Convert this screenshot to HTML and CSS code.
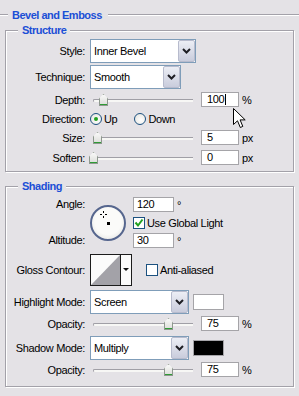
FILE: index.html
```html
<!DOCTYPE html>
<html lang="en">
<head>
    <meta charset="UTF-8">
    <title>Bevel and Emboss</title>
    <link rel="stylesheet" href="styles.css">
</head>
<body>
    <div class="panel">
        <div class="section-title"><span>Bevel and Emboss</span></div>

        <fieldset class="group structure">
            <legend>Structure</legend>

            <div class="row row-select">
                <span class="label">Style:</span>
                <div class="select sel-style">
                    <span class="value">Inner Bevel</span>
                    <span class="btn"><svg width="9" height="6" viewBox="0 0 9 6"><polyline points="1,1 4.5,4.5 8,1" fill="none" stroke="#1e1e24" stroke-width="2"/></svg></span>
                </div>
            </div>

            <div class="row row-select gap-2">
                <span class="label">Technique:</span>
                <div class="select sel-tech">
                    <span class="value">Smooth</span>
                    <span class="btn"><svg width="9" height="6" viewBox="0 0 9 6"><polyline points="1,1 4.5,4.5 8,1" fill="none" stroke="#1e1e24" stroke-width="2"/></svg></span>
                </div>
            </div>

            <div class="row row-slider gap-3">
                <span class="label">Depth:</span>
                <div class="controls">
                    <div class="slider">
                        <div class="track"></div>
                        <span class="thumb" style="left: 9px"></span>
                    </div>
                    <div class="field">100<span class="caret"></span></div>
                    <span class="unit">%</span>
                </div>
            </div>

            <div class="row row-radio gap-4">
                <span class="label">Direction:</span>
                <div class="controls">
                    <span class="radio on"></span><span class="radio-text">Up</span>
                    <span class="radio"></span><span class="radio-text">Down</span>
                </div>
            </div>

            <div class="row row-slider gap-3">
                <span class="label">Size:</span>
                <div class="controls">
                    <div class="slider">
                        <div class="track"></div>
                        <span class="thumb" style="left: 3px"></span>
                    </div>
                    <div class="field">5</div>
                    <span class="unit">px</span>
                </div>
            </div>

            <div class="row row-slider gap-5">
                <span class="label">Soften:</span>
                <div class="controls">
                    <div class="slider">
                        <div class="track"></div>
                        <span class="thumb" style="left: -1px"></span>
                    </div>
                    <div class="field">0</div>
                    <span class="unit">px</span>
                </div>
            </div>
        </fieldset>

        <fieldset class="group shading">
            <legend>Shading</legend>

            <div class="angle">
                <span class="label angle-label">Angle:</span>
                <div class="dial">
                    <span class="cross"></span>
                    <span class="dot"></span>
                </div>
                <div class="controls angle-input">
                    <div class="field wide">120</div>
                    <span class="unit">°</span>
                </div>
                <div class="controls check-row">
                    <span class="check on"><svg width="10" height="10" viewBox="0 0 10 10"><polyline points="1.5,4.5 4,7.5 8.5,1.5" fill="none" stroke="#21a121" stroke-width="2"/></svg></span>
                    <span class="check-text">Use Global Light</span>
                </div>
                <span class="label alt-label">Altitude:</span>
                <div class="controls alt-input">
                    <div class="field wide">30</div>
                    <span class="unit">°</span>
                </div>
            </div>

            <div class="row row-contour">
                <span class="label">Gloss Contour:</span>
                <div class="controls">
                    <div class="contour">
                        <svg width="42" height="32" viewBox="0 0 42 32">
                            <rect x="0.5" y="0.5" width="41" height="31" fill="#fbfbfb" stroke="#1c1c1c"/>
                            <polygon points="1,31 30,1 30,31" fill="#a3a2a8"/>
                            <line x1="30.5" y1="1" x2="30.5" y2="31" stroke="#1c1c1c"/>
                            <polygon points="33,14 39,14 36,17" fill="#111"/>
                        </svg>
                    </div>
                    <span class="check anti"></span>
                    <span class="check-text">Anti-aliased</span>
                </div>
            </div>

            <div class="row row-select gap-4">
                <span class="label">Highlight Mode:</span>
                <div class="controls">
                    <div class="select sel-mode">
                        <span class="value">Screen</span>
                        <span class="btn"><svg width="9" height="6" viewBox="0 0 9 6"><polyline points="1,1 4.5,4.5 8,1" fill="none" stroke="#1e1e24" stroke-width="2"/></svg></span>
                    </div>
                    <span class="swatch white"></span>
                </div>
            </div>

            <div class="row row-slider gap-2">
                <span class="label">Opacity:</span>
                <div class="controls">
                    <div class="slider">
                        <div class="track"></div>
                        <span class="thumb" style="left: 74px"></span>
                    </div>
                    <div class="field">75</div>
                    <span class="unit">%</span>
                </div>
            </div>

            <div class="row row-select gap-5">
                <span class="label">Shadow Mode:</span>
                <div class="controls">
                    <div class="select sel-mode">
                        <span class="value">Multiply</span>
                        <span class="btn"><svg width="9" height="6" viewBox="0 0 9 6"><polyline points="1,1 4.5,4.5 8,1" fill="none" stroke="#1e1e24" stroke-width="2"/></svg></span>
                    </div>
                    <span class="swatch black"></span>
                </div>
            </div>

            <div class="row row-slider gap-2">
                <span class="label">Opacity:</span>
                <div class="controls">
                    <div class="slider">
                        <div class="track"></div>
                        <span class="thumb" style="left: 74px"></span>
                    </div>
                    <div class="field">75</div>
                    <span class="unit">%</span>
                </div>
            </div>
        </fieldset>

        <svg class="cursor" width="13" height="21" viewBox="0 0 13 21">
            <path d="M0.5,0.5 L0.5,16.5 L4.5,12.8 L7.3,19.5 L9.8,18.4 L7.1,11.9 L12.2,11.9 Z" fill="#fff" stroke="#000"/>
        </svg>
    </div>
</body>
</html>
```

FILE: styles.css
```css
* {
    margin: 0;
    padding: 0;
    box-sizing: border-box;
}

body {
    background: #e4e2e6;
    font-family: 'Liberation Sans', Arial, sans-serif;
    font-size: 11px;
    letter-spacing: -0.35px;
    color: #000;
    width: 299px;
    height: 396px;
    overflow: hidden;
}

.panel {
    position: relative;
    padding-top: 8px;
}

/* headings */

.section-title {
    display: flex;
    align-items: center;
    height: 14px;
    font-weight: bold;
    color: #1b4fd6;
    letter-spacing: -0.5px;
}

.section-title::before,
.section-title::after {
    content: "";
    border-top: 1px solid #a3a1a9;
    border-bottom: 1px solid #fff;
}

.section-title::before {
    width: 8px;
    margin-right: 4px;
}

.section-title::after {
    flex: 1;
    margin-left: 6px;
}

.group {
    margin: 1px 5px 0;
    border: 1px solid #a3a1a9;
    box-shadow: inset 1px 1px 0 #fff, 1px 1px 0 #fff;
    min-inline-size: 0;
}

.group legend {
    margin-left: 12px;
    padding: 0 4px;
    line-height: 14px;
    font-weight: bold;
    color: #1b4fd6;
    letter-spacing: -0.5px;
    background: #e4e2e6;
}

.structure {
    padding: 2px 0 6px;
}

.shading {
    margin-top: 7px;
    padding: 4px 0 9px;
}

/* rows */

.row {
    display: grid;
    grid-template-columns: 79px auto;
    column-gap: 5px;
    align-items: center;
}

.label {
    text-align: right;
    white-space: nowrap;
}

.row-select { height: 24px; }
.row-slider { height: 15px; }
.row-radio { height: 16px; }
.row-contour { height: 32px; margin-top: 6px; }

.gap-2 { margin-top: 2px; }
.gap-3 { margin-top: 3px; }
.gap-4 { margin-top: 4px; }
.gap-5 { margin-top: 5px; }

.controls {
    display: flex;
    align-items: center;
}

/* dropdowns */

.select {
    display: flex;
    align-items: stretch;
    height: 24px;
    border: 1px solid #7f9db9;
    background: #fff;
}

.sel-style { width: 106px; }
.sel-tech { width: 91px; }
.sel-mode { width: 99px; }

.select .value {
    flex: 1;
    padding-left: 3px;
    line-height: 22px;
}

.select .btn {
    width: 17px;
    display: flex;
    align-items: center;
    justify-content: center;
    border: 1px solid #b7bbcd;
    border-radius: 2px;
    background: linear-gradient(#eceef5, #c9ccdc);
}

.swatch {
    width: 31px;
    height: 16px;
    margin-left: 4px;
    border: 1px solid #a5a4a8;
}

.swatch.white { background: #fff; }
.swatch.black { background: #000; }

/* sliders */

.slider {
    position: relative;
    width: 111px;
    height: 15px;
    padding: 7px 8px 0 3px;
}

.track {
    height: 3px;
    border-top: 1px solid #a09fa6;
    border-left: 1px solid #a09fa6;
    border-radius: 2px 0 0 2px;
    background: #f7f7f5;
}

.thumb {
    position: absolute;
    top: 2px;
    width: 9px;
    height: 12px;
    background:
        linear-gradient(#2f9b36, #2f9b36) bottom / 100% 2px no-repeat,
        linear-gradient(#fbfbfb, #d9dbd6);
    clip-path: polygon(50% 0, 100% 38%, 100% 100%, 0 100%, 0 38%);
    box-shadow: inset 0 0 0 1px #8e988e;
}

/* text fields */

.field {
    width: 38px;
    height: 15px;
    border: 1px solid #a5a4a8;
    background: #fff;
    padding-left: 5px;
    line-height: 13px;
    display: flex;
    align-items: center;
}

.field.wide {
    width: 41px;
    padding-left: 3px;
}

.caret {
    display: inline-block;
    width: 1px;
    height: 11px;
    margin-left: 1px;
    background: #000;
}

.unit {
    margin-left: 3px;
}

/* radio and check */

.radio {
    width: 12px;
    height: 12px;
    border: 1px solid #1c5180;
    border-radius: 50%;
    background: radial-gradient(circle at 60% 60%, #fff, #e2e2dc);
    display: flex;
    align-items: center;
    justify-content: center;
}

.radio.on::after {
    content: "";
    width: 4px;
    height: 4px;
    border-radius: 50%;
    background: #21a121;
}

.radio-text {
    margin-left: 2px;
    margin-right: 17px;
}

.check {
    width: 12px;
    height: 12px;
    border: 1px solid #1c5180;
    background: #fff;
    display: flex;
    align-items: center;
    justify-content: center;
}

.check-text {
    margin-left: 2px;
}

.check.anti {
    margin-left: 14px;
}

/* angle block */

.angle {
    display: grid;
    grid-template-columns: 79px 38px auto;
    grid-template-rows: 15px 19px 15px;
    column-gap: 5px;
    row-gap: 1px;
    align-items: center;
}

.angle-label {
    grid-column: 1;
    grid-row: 1;
    align-self: start;
    padding-top: 1px;
}

.angle-input {
    grid-column: 3;
    grid-row: 1;
}

.check-row {
    grid-column: 3;
    grid-row: 2;
}

.alt-label {
    grid-column: 1;
    grid-row: 3;
    padding-bottom: 2px;
}

.alt-input {
    grid-column: 3;
    grid-row: 3;
}

.dial {
    grid-column: 2;
    grid-row: 1 / 4;
    align-self: start;
    margin-top: 8px;
    position: relative;
    width: 36px;
    height: 36px;
    border: 2px solid #56668e;
    border-radius: 50%;
    background: radial-gradient(circle at 50% 45%, #fbfbf9 55%, #dcdcd8);
}

.dial .dot {
    position: absolute;
    left: 15px;
    top: 15px;
    width: 3px;
    height: 3px;
    background: #000;
}

.dial .cross {
    position: absolute;
    left: 8px;
    top: 4px;
    width: 7px;
    height: 7px;
    background:
        linear-gradient(#000, #000) 3px 0 / 1px 2px no-repeat,
        linear-gradient(#000, #000) 3px 5px / 1px 2px no-repeat,
        linear-gradient(#000, #000) 0 3px / 2px 1px no-repeat,
        linear-gradient(#000, #000) 5px 3px / 2px 1px no-repeat;
}

.contour {
    width: 42px;
    height: 32px;
}

.contour svg {
    display: block;
}

.cursor {
    position: absolute;
    left: 233px;
    top: 108px;
}
```
